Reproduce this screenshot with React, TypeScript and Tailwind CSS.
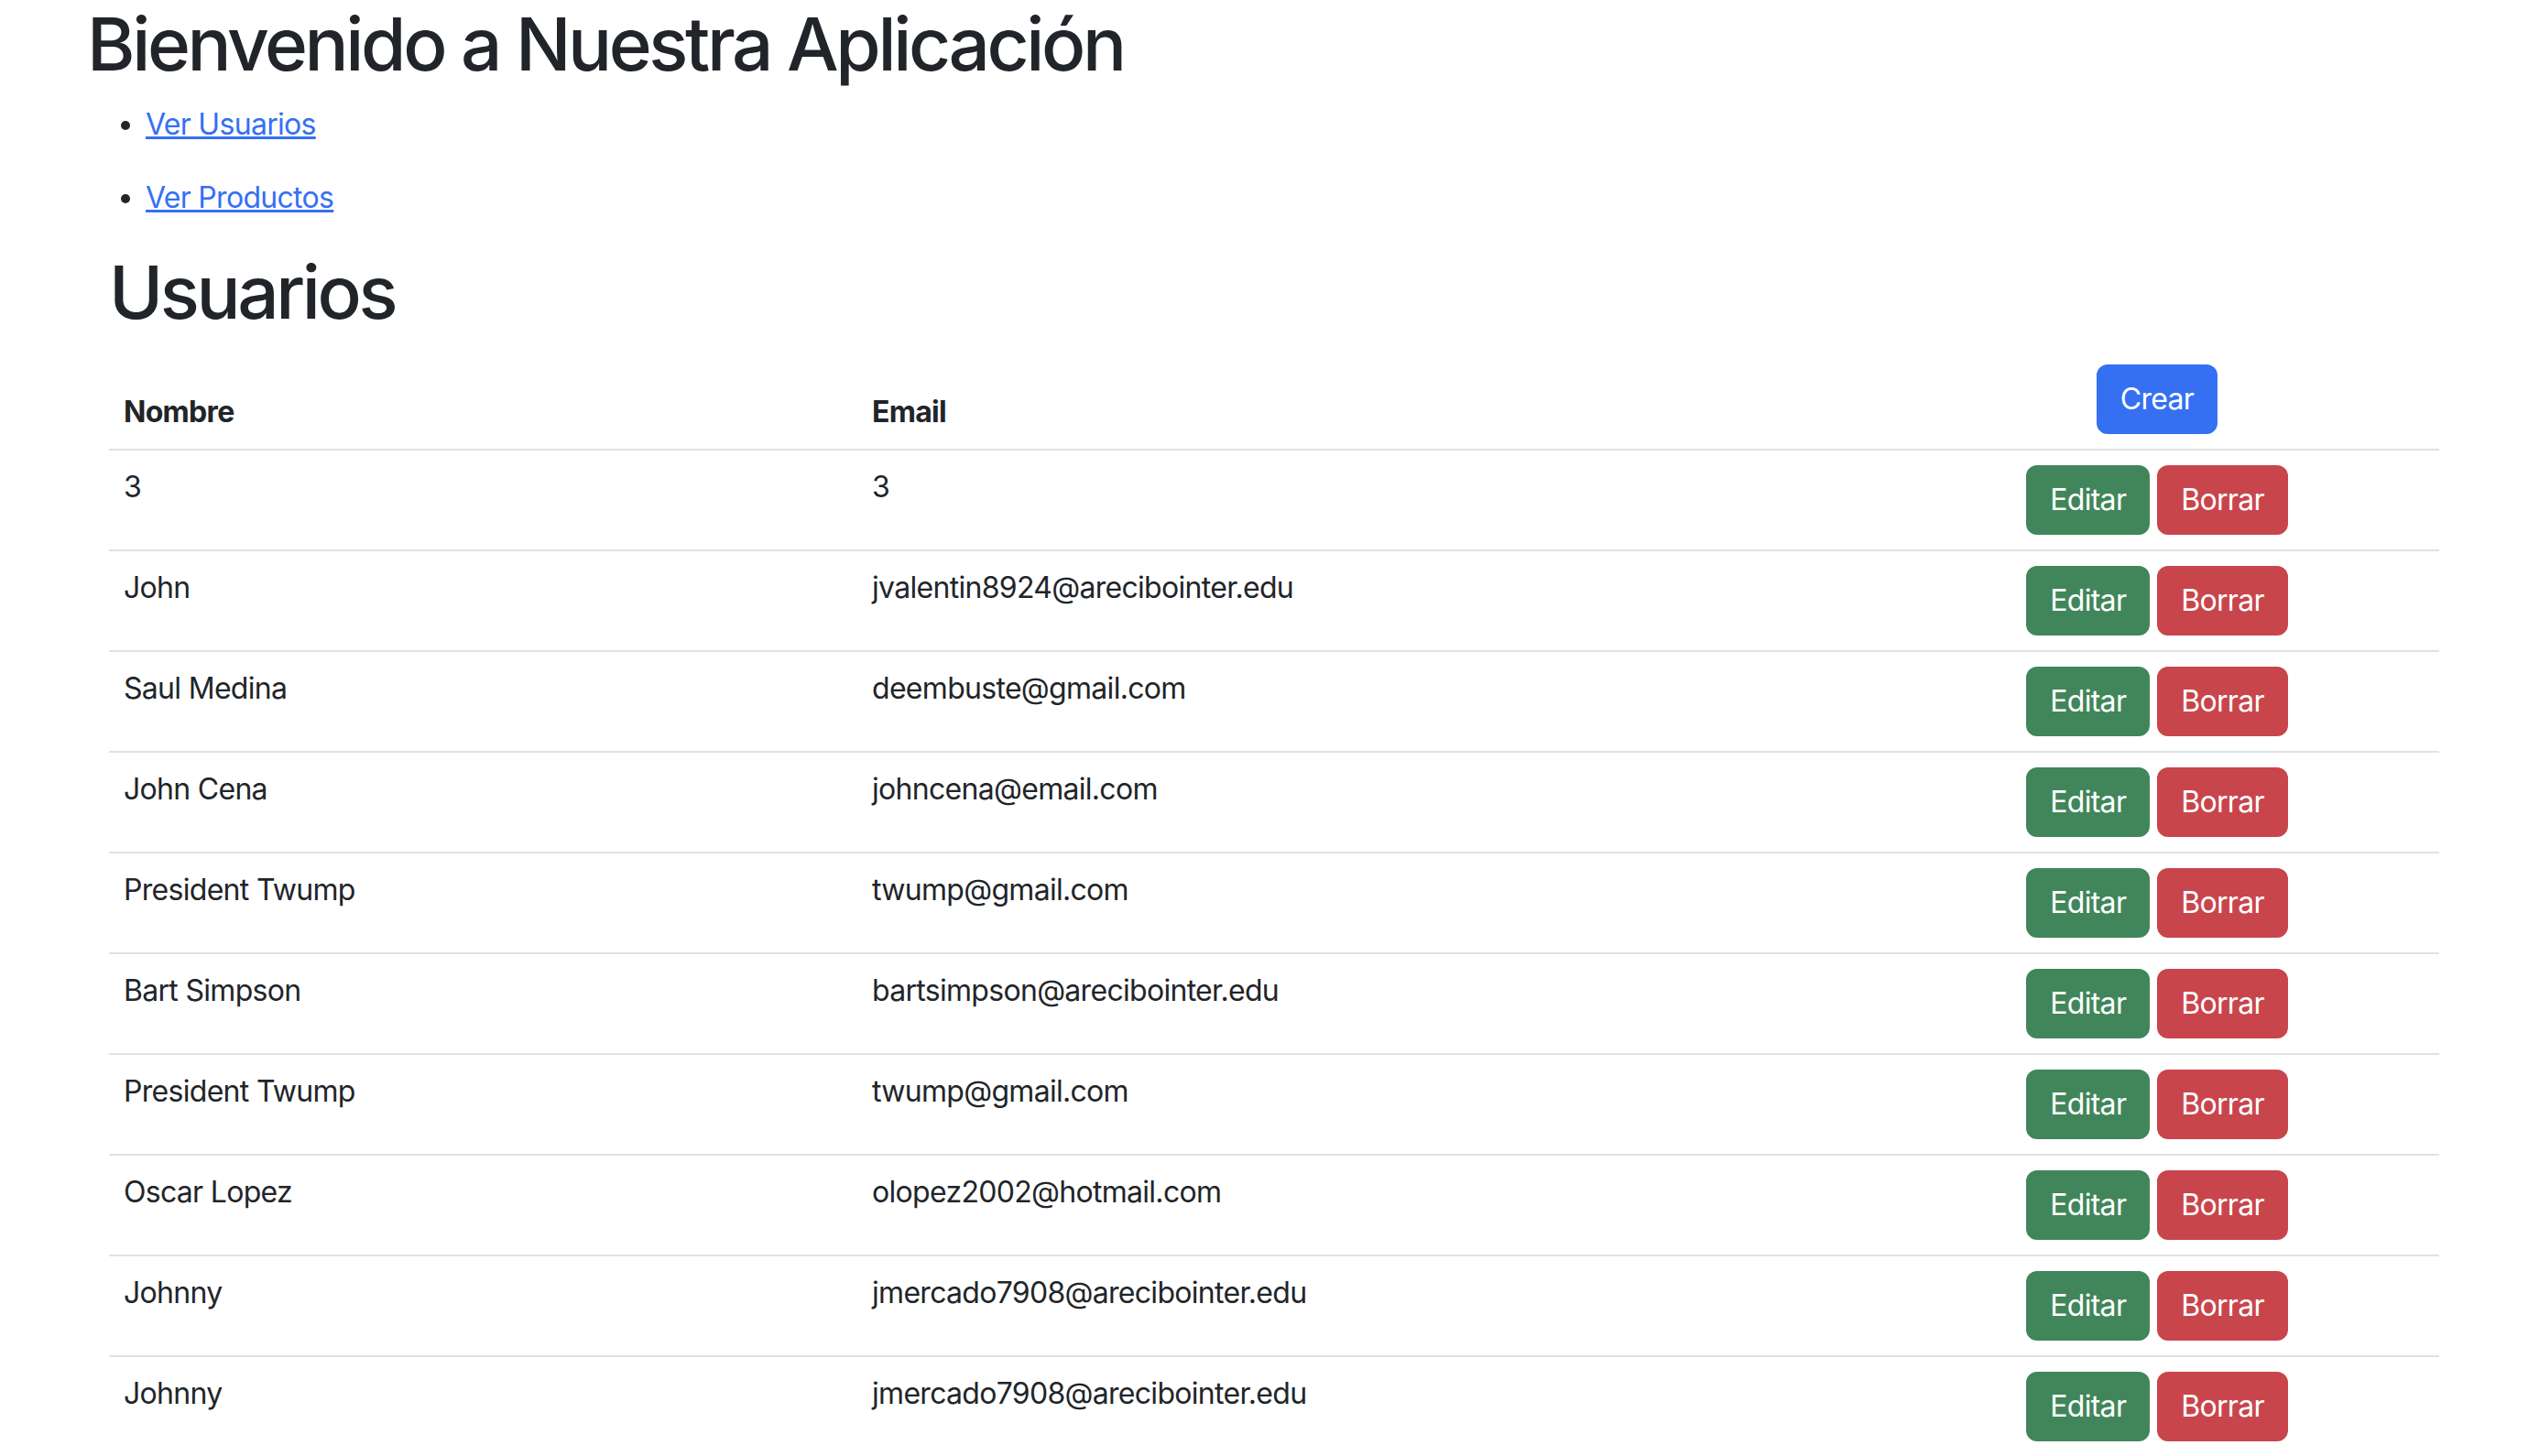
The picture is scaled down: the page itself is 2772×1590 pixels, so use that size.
import React from "react";

const usuarios = [
  { nombre: "3", email: "3" },
  { nombre: "John", email: "jvalentin8924@arecibointer.edu" },
  { nombre: "Saul Medina", email: "deembuste@gmail.com" },
  { nombre: "John Cena", email: "johncena@email.com" },
  { nombre: "President Twump", email: "twump@gmail.com" },
  { nombre: "Bart Simpson", email: "bartsimpson@arecibointer.edu" },
  { nombre: "President Twump", email: "twump@gmail.com" },
  { nombre: "Oscar Lopez", email: "olopez2002@hotmail.com" },
  { nombre: "Johnny", email: "jmercado7908@arecibointer.edu" },
  { nombre: "Johnny", email: "jmercado7908@arecibointer.edu" },
];

const btn = "inline-block px-6 py-3 text-[32px] leading-[48px] font-normal text-white rounded-[12px] border-2";

export default function App() {
  return (
    <div className="min-h-screen bg-white pl-[95px] text-[#212529] font-['Inter','Liberation_Sans',sans-serif] text-[32px] leading-[48px] tracking-[-0.7px]">
      <h1 className="text-[80px] leading-[96px] font-medium tracking-[-3.4px] mb-[16px]">Bienvenido a Nuestra Aplicación</h1>

      <ul className="list-disc pl-16 mb-[31px]">
        <li className="mb-8">
          <a href="#" className="text-[#3570f3] underline">Ver Usuarios</a>
        </li>
        <li>
          <a href="#" className="text-[#3570f3] underline">Ver Productos</a>
        </li>
      </ul>

      <div className="pl-6">
        <h2 className="text-[80px] leading-[96px] font-medium tracking-[-3.4px] mb-[15px]">Usuarios</h2>

        <table className="w-[2544px] border-collapse">
          <thead>
            <tr className="border-b-2 border-[#dee2e6]">
              <th className="w-[817px] p-4 text-left align-bottom font-bold">Nombre</th>
              <th className="w-[1111px] p-4 text-left align-bottom font-bold">Email</th>
              <th className="p-4 text-center align-bottom">
                <button className={`${btn} bg-[#3570f3] border-[#3570f3]`}>Crear</button>
              </th>
            </tr>
          </thead>
          <tbody>
            {usuarios.map((u, i) => (
              <tr key={i} className="border-b-2 border-[#dee2e6]">
                <td className="p-4 align-top">{u.nombre}</td>
                <td className="p-4 align-top">{u.email}</td>
                <td className="p-4 align-top text-center">
                  <div className="flex justify-center gap-2">
                    <button className={`${btn} bg-[#41865a] border-[#41865a]`}>Editar</button>
                    <button className={`${btn} bg-[#c9454c] border-[#c9454c]`}>Borrar</button>
                  </div>
                </td>
              </tr>
            ))}
          </tbody>
        </table>
      </div>
    </div>
  );
}
